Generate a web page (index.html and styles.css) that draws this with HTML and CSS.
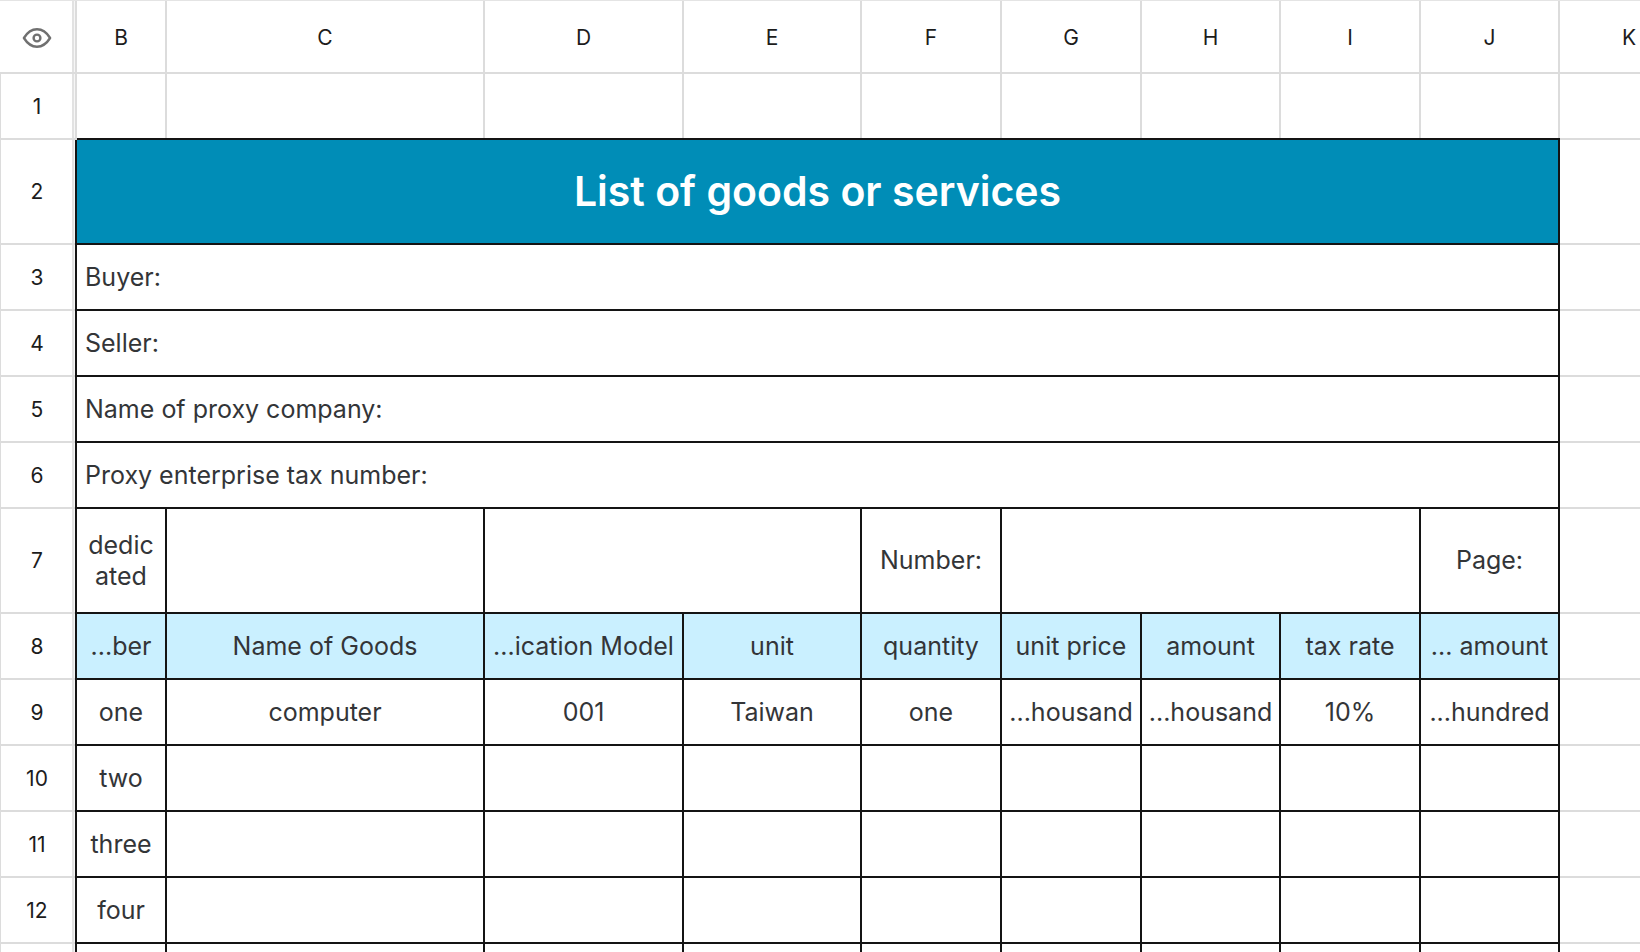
FILE: index.html
```
<!DOCTYPE html>
<html lang="en">

<head>
  <meta charset="utf-8">
  <title>List of goods or services</title>
  <meta name="viewport" content="width=device-width, initial-scale=1">
  <link rel="stylesheet" href="styles.css">
</head>

<body>
  <div class="sheet-view">
    <table class="sheet">
      <colgroup>
        <col class="col-head">
        <col class="col-b">
        <col class="col-c">
        <col class="col-d">
        <col class="col-e">
        <col class="col-std">
        <col class="col-std">
        <col class="col-narrow">
        <col class="col-std">
        <col class="col-narrow">
        <col class="col-std">
      </colgroup>
      <thead>
        <tr class="letters">
          <th class="corner">
            <svg class="eye" viewBox="0 0 30 22" role="img" aria-label="Hidden columns">
              <path d="M1.900 11C5.500 5.200 9.800 2.300 15 2.300S24.500 5.200 28.100 11C24.500 16.800 20.200 19.700 15 19.700S5.500 16.800 1.900 11z" />
              <circle cx="15" cy="11" r="3.400" />
            </svg>
          </th>
          <th scope="col">B</th>
          <th scope="col">C</th>
          <th scope="col">D</th>
          <th scope="col">E</th>
          <th scope="col">F</th>
          <th scope="col">G</th>
          <th scope="col">H</th>
          <th scope="col">I</th>
          <th scope="col">J</th>
          <th scope="col">K</th>
        </tr>
      </thead>
      <tbody>
        <tr class="before-data">
          <th scope="row">1</th>
          <td></td><td></td><td></td><td></td><td></td><td></td><td></td><td></td><td></td>
          <td class="outside"></td>
        </tr>
        <tr class="data tall">
          <th scope="row">2</th>
          <td class="title" colspan="9">List of goods or services</td>
          <td class="outside"></td>
        </tr>
        <tr class="data">
          <th scope="row">3</th>
          <td class="field" colspan="9">Buyer:</td>
          <td class="outside"></td>
        </tr>
        <tr class="data">
          <th scope="row">4</th>
          <td class="field" colspan="9">Seller:</td>
          <td class="outside"></td>
        </tr>
        <tr class="data">
          <th scope="row">5</th>
          <td class="field" colspan="9">Name of proxy company:</td>
          <td class="outside"></td>
        </tr>
        <tr class="data">
          <th scope="row">6</th>
          <td class="field" colspan="9">Proxy enterprise tax number:</td>
          <td class="outside"></td>
        </tr>
        <tr class="data tall">
          <th scope="row">7</th>
          <td class="wrap">dedicated</td>
          <td></td>
          <td colspan="2"></td>
          <td>Number:</td>
          <td colspan="3"></td>
          <td>Page:</td>
          <td class="outside"></td>
        </tr>
        <tr class="data heading">
          <th scope="row">8</th>
          <td>...ber</td>
          <td>Name of Goods</td>
          <td>...ication Model</td>
          <td>unit</td>
          <td>quantity</td>
          <td>unit price</td>
          <td>amount</td>
          <td>tax rate</td>
          <td>... amount</td>
          <td class="outside"></td>
        </tr>
        <tr class="data">
          <th scope="row">9</th>
          <td>one</td>
          <td>computer</td>
          <td>001</td>
          <td>Taiwan</td>
          <td>one</td>
          <td>...housand</td>
          <td>...housand</td>
          <td>10%</td>
          <td>...hundred</td>
          <td class="outside"></td>
        </tr>
        <tr class="data">
          <th scope="row">10</th>
          <td>two</td>
          <td></td><td></td><td></td><td></td><td></td><td></td><td></td><td></td>
          <td class="outside"></td>
        </tr>
        <tr class="data">
          <th scope="row">11</th>
          <td>three</td>
          <td></td><td></td><td></td><td></td><td></td><td></td><td></td><td></td>
          <td class="outside"></td>
        </tr>
        <tr class="data">
          <th scope="row">12</th>
          <td>four</td>
          <td></td><td></td><td></td><td></td><td></td><td></td><td></td><td></td>
          <td class="outside"></td>
        </tr>
        <tr class="data">
          <th scope="row"></th>
          <td></td><td></td><td></td><td></td><td></td><td></td><td></td><td></td><td></td>
          <td class="outside"></td>
        </tr>
      </tbody>
    </table>
  </div>
</body>

</html>
```
FILE: styles.css
```
body {
  margin: 0;
  background: #fff;
  font-family: Inter, "Liberation Sans", sans-serif;
}

.sheet-view {
  height: 100vh;
  overflow: hidden;
}

.sheet {
  width: 1700px;
  table-layout: fixed;
  border-collapse: separate;
  border-spacing: 0;
  font-size: 25px;
  line-height: 31px;
  color: #333538;
}

.col-head {
  width: 77px;
}

.col-b {
  width: 90px;
}

.col-c {
  width: 318px;
}

.col-d {
  width: 199px;
}

.col-e {
  width: 178px;
}

.col-std {
  width: 140px;
}

.col-narrow {
  width: 139px;
}

/* grid lines are inset shadows, so the corners stay square */
.sheet th,
.sheet td {
  box-sizing: border-box;
  height: 66px;
  padding: 0 2px 2px 0;
  box-shadow: inset -2px 0 #dcdcdc, inset 0 -2px #dcdcdc;
  text-align: center;
  vertical-align: middle;
  white-space: nowrap;
}

.sheet th {
  font-size: 21px;
  font-weight: 400;
  color: #1c1c1c;
}

.sheet .letters th {
  height: 74px;
  padding-bottom: 0;
  border-top: 1px solid #e4e4e4;
}

/* double rule between the row numbers and the frozen edge */
.sheet th:first-child {
  padding-right: 4px;
  box-shadow: inset -2px 0 #dcdcdc, inset 0 -2px #dcdcdc, inset -3px 0 #f6f6f6, inset -5px 0 #e2e2e2;
}

.sheet tbody th {
  border-left: 1px solid #dcdcdc;
}

.eye {
  display: block;
  width: 30px;
  height: 22px;
  margin: 0 auto;
  fill: none;
  stroke: #707070;
  stroke-width: 2.4;
  stroke-linejoin: round;
}

.sheet .tall td,
.sheet .tall th {
  height: 105px;
}

.sheet .before-data td:not(.outside) {
  box-shadow: inset 0 -2px #141414, inset -2px 0 #dcdcdc;
}

.sheet .data td:not(.outside) {
  box-shadow: inset -2px 0 #141414, inset 0 -2px #141414;
}

.sheet .data th {
  box-shadow: inset -2px 0 #141414, inset 0 -2px #dcdcdc, inset -3px 0 #f6f6f6, inset -5px 0 #e2e2e2;
}

.sheet .title {
  background: #008db7;
  color: #fff;
  font-size: 41px;
  font-weight: 600;
}

.sheet .field {
  padding-left: 8px;
  text-align: left;
}

.sheet .wrap {
  padding: 0 10px 2px 8px;
  white-space: normal;
  word-break: break-all;
}

.heading td:not(.outside) {
  background: #caf0ff;
}
```
